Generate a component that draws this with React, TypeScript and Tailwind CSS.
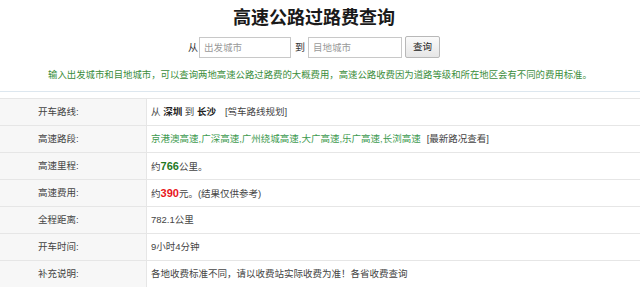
const rows: { label: string; value: React.ReactNode }[] = [
  {
    label: '开车路线:',
    value: (
      <>
        从 <b className="font-bold text-[#222]">深圳</b> 到 <b className="font-bold text-[#222]">长沙</b>
        <span className="ml-[9px]">[驾车路线规划]</span>
      </>
    ),
  },
  {
    label: '高速路段:',
    value: (
      <>
        <span className="text-[#3d9a4f]">京港澳高速,广深高速,广州绕城高速,大广高速,乐广高速,长浏高速</span>
        <span className="ml-[6px]">[最新路况查看]</span>
      </>
    ),
  },
  {
    label: '高速里程:',
    value: (
      <>
        约<b className="text-[11px] font-bold text-[#1f7a1f]">766</b>公里。
      </>
    ),
  },
  {
    label: '高速费用:',
    value: (
      <>
        约<b className="text-[11px] font-bold text-[#e8141a]">390</b>元。(结果仅供参考)
      </>
    ),
  },
  { label: '全程距离:', value: '782.1公里' },
  { label: '开车时间:', value: '9小时4分钟' },
  { label: '补充说明:', value: '各地收费标准不同，请以收费站实际收费为准！各省收费查询' },
];

export default function App() {
  return (
    <div className="w-[640px] h-[287px] overflow-hidden bg-white font-['Liberation_Sans','Noto_Sans_CJK_SC',sans-serif] text-[#333]">
      {/* Header */}
      <div className="pr-[12px]">
        <h1 className="pt-[6px] text-center text-[18px] font-bold leading-[24px] text-[#1a1a1a]">高速公路过路费查询</h1>
        <div className="mt-[6px] flex items-center justify-center text-[10px]">
          <span>从</span>
          <input
            placeholder="出发城市"
            className="ml-[1px] h-[21px] w-[92px] border border-[#c8c8c8] px-[4px] text-[9.5px] outline-none placeholder:text-[#9a9a9a]"
          />
          <span className="ml-[4px] mr-[3px]">到</span>
          <input
            placeholder="目地城市"
            className="h-[21px] w-[94px] border border-[#c8c8c8] px-[4px] text-[9.5px] outline-none placeholder:text-[#9a9a9a]"
          />
          <button className="ml-[3px] h-[22px] w-[35px] rounded-[2px] border border-[#b8b8b8] bg-gradient-to-b from-[#fafafa] to-[#e6e6e6] text-[9.5px] text-[#222]">
            查询
          </button>
        </div>
      </div>
      <p className="mt-[10px] text-center text-[9.4px] leading-[14px] text-[#3b8d3b]">
        输入出发城市和目地城市，可以查询两地高速公路过路费的大概费用，高速公路收费因为道路等级和所在地区会有不同的费用标准。
      </p>
      <div className="mt-[9px] border-t border-[#dde7ef]" />

      {/* Result table */}
      <div className="mt-[6px] border-t border-[#e6e6e6] text-[9.5px]">
        {rows.map((r) => (
          <div key={r.label} className="grid h-[27px] grid-cols-[147px_1fr] border-b border-[#e6e6e6]">
            <div className="flex items-center border-r border-[#e6e6e6] bg-[#f7f7f7] pl-[38px] text-[#444]">{r.label}</div>
            <div className="flex items-center pl-[4px] text-[#444]">
              <span>{r.value}</span>
            </div>
          </div>
        ))}
      </div>
    </div>
  );
}
